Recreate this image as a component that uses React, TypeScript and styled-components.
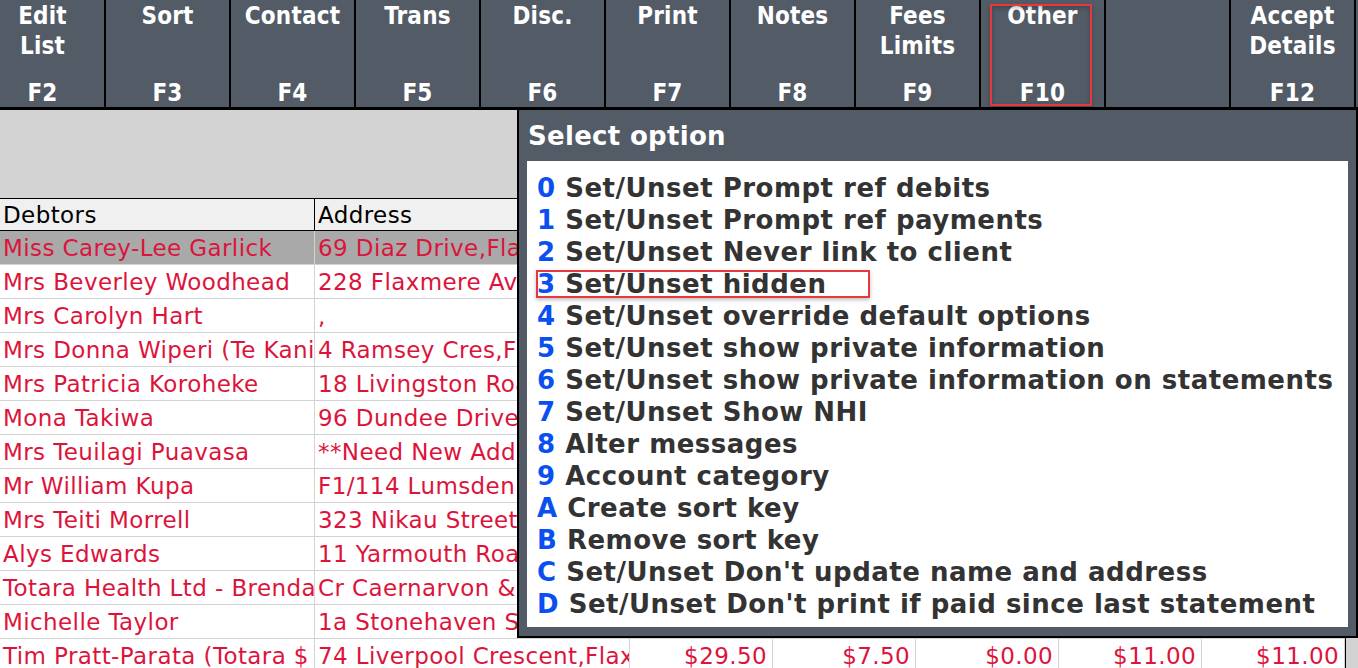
import React from 'react'
import styled, { createGlobalStyle } from 'styled-components'

const GlobalStyle = createGlobalStyle`
    html, body {
        margin: 0;
        padding: 0;
        background: #ffffff;
        overflow: hidden;
    }
    #root {
        width: 1358px;
        height: 668px;
    }
`

const SLATE = '#525b66'
const CRIMSON = '#dc143c'

type FKey = { label: string[]; key: string; highlight?: boolean }

const fkeys: FKey[] = [
    { label: ['Edit', 'List'], key: 'F2' },
    { label: ['Sort'], key: 'F3' },
    { label: ['Contact'], key: 'F4' },
    { label: ['Trans'], key: 'F5' },
    { label: ['Disc.'], key: 'F6' },
    { label: ['Print'], key: 'F7' },
    { label: ['Notes'], key: 'F8' },
    { label: ['Fees', 'Limits'], key: 'F9' },
    { label: ['Other'], key: 'F10', highlight: true },
    { label: [], key: '' },
    { label: ['Accept', 'Details'], key: 'F12' },
]

type Debtor = { name: string; address: string; amounts?: string[] }

const debtors: Debtor[] = [
    { name: 'Miss Carey-Lee Garlick', address: '69 Diaz Drive,Flaxmere' },
    { name: 'Mrs Beverley Woodhead', address: '228 Flaxmere Avenue,Flaxmere' },
    { name: 'Mrs Carolyn Hart', address: ',' },
    { name: 'Mrs Donna Wiperi (Te Kani)', address: '4 Ramsey Cres,Flaxmere' },
    { name: 'Mrs Patricia Koroheke', address: '18 Livingston Road,Flaxmere' },
    { name: 'Mona Takiwa', address: '96 Dundee Drive,Flaxmere' },
    { name: 'Mrs Teuilagi Puavasa', address: '**Need New Address**' },
    { name: 'Mr William Kupa', address: 'F1/114 Lumsden Road,Akina' },
    { name: 'Mrs Teiti Morrell', address: '323 Nikau Street,Hastings' },
    { name: 'Alys Edwards', address: '11 Yarmouth Road,Flaxmere' },
    { name: 'Totara Health Ltd - Brenda', address: 'Cr Caernarvon & Swansea Rd' },
    { name: 'Michelle Taylor', address: '1a Stonehaven Street,Flaxmere' },
    {
        name: 'Tim Pratt-Parata (Totara $ Health)',
        address: '74 Liverpool Crescent,Flaxmere',
        amounts: ['$29.50', '$7.50', '$0.00', '$11.00', '$11.00'],
    },
]

const numericColumns = 5

const options: { key: string; text: string; boxed?: boolean }[] = [
    { key: '0', text: 'Set/Unset Prompt ref debits' },
    { key: '1', text: 'Set/Unset Prompt ref payments' },
    { key: '2', text: 'Set/Unset Never link to client' },
    { key: '3', text: 'Set/Unset hidden', boxed: true },
    { key: '4', text: 'Set/Unset override default options' },
    { key: '5', text: 'Set/Unset show private information' },
    { key: '6', text: 'Set/Unset show private information on statements' },
    { key: '7', text: 'Set/Unset Show NHI' },
    { key: '8', text: 'Alter messages' },
    { key: '9', text: 'Account category' },
    { key: 'A', text: 'Create sort key' },
    { key: 'B', text: 'Remove sort key' },
    { key: 'C', text: "Set/Unset Don't update name and address" },
    { key: 'D', text: "Set/Unset Don't print if paid since last statement" },
]

const Screen = styled.div`
    position: relative;
    width: 1358px;
    height: 668px;
    overflow: hidden;
    font-family: 'DejaVu Sans', Verdana, sans-serif;
`

const Toolbar = styled.div`
    display: flex;
    height: 107px;
    margin-left: -19px;
    background: ${SLATE};
    border-bottom: 3px solid #000;
`

const FKeyButton = styled.div<{ $highlight?: boolean }>`
    position: relative;
    flex: 0 0 123px;
    display: flex;
    flex-direction: column;
    align-items: center;
    padding-top: 1px;
    border-right: 2px solid #000;
    color: #ffffff;
    font-family: 'DejaVu Sans Condensed', 'DejaVu Sans', Tahoma, sans-serif;
    font-weight: bold;
    font-size: 24px;
    letter-spacing: 0.2px;
    line-height: 30px;

    ${({ $highlight }) => $highlight && `
        &::after {
            content: '';
            position: absolute;
            left: 9px;
            right: 12px;
            top: 4px;
            bottom: 1px;
            border: 2px solid #e8383d;
            box-shadow: inset 0 2px 4px rgba(0, 0, 0, 0.25), 0 2px 4px rgba(0, 0, 0, 0.25);
        }
    `}
`

const FKeyLabel = styled.div`
    flex: 1;
    text-align: center;
`

const FKeyCode = styled.div`
    height: 29px;
    text-align: center;
`

const GreyBand = styled.div`
    height: 88px;
    background: #d3d3d3;
    border-bottom: 1px solid #000;
`

const Grid = styled.div`
    display: grid;
    grid-template-columns: 315px 315px repeat(${numericColumns}, 143px) 1fr;
`

const HeaderCell = styled.div`
    height: 31px;
    line-height: 32px;
    padding-left: 3px;
    background: #f0f0f0;
    color: #000;
    font-size: 23px;
    letter-spacing: 0.4px;
    border-bottom: 1px solid #000;
    border-right: 1px solid #000;
    white-space: nowrap;
    overflow: hidden;
`

const Cell = styled.div<{ $selected?: boolean; $numeric?: boolean }>`
    height: 33px;
    line-height: 34px;
    padding: ${({ $numeric }) => ($numeric ? '0 5px 0 0' : '0 0 0 3px')};
    text-align: ${({ $numeric }) => ($numeric ? 'right' : 'left')};
    background: ${({ $selected }) => ($selected ? '#a9a9a9' : '#ffffff')};
    color: ${CRIMSON};
    font-size: 23px;
    letter-spacing: 0.4px;
    border-bottom: 1px solid #d3d3d3;
    border-right: 1px solid #d3d3d3;
    white-space: nowrap;
    overflow: hidden;
`

const ScrollTrack = styled.div`
    background: #d3d3d3;
    border-left: 1px solid #000;
`

const Dialog = styled.div`
    position: absolute;
    left: 517px;
    top: 110px;
    width: 837px;
    height: 526px;
    display: flex;
    flex-direction: column;
    background: ${SLATE};
    border-left: 2px solid #000;
    border-right: 2px solid #000;
    border-bottom: 2px solid #000;
`

const DialogTitle = styled.div`
    height: 51px;
    line-height: 53px;
    padding-left: 9px;
    color: #ffffff;
    font-weight: bold;
    font-size: 26px;
    letter-spacing: 0.3px;
`

const DialogBody = styled.div`
    margin: 0 8px 9px 8px;
    flex: 1;
    background: #ffffff;
    padding: 11px 0 0 10px;
    display: flex;
    flex-direction: column;
`

const OptionRow = styled.div<{ $boxed?: boolean }>`
    position: relative;
    height: 32px;
    line-height: 33px;
    color: #333333;
    font-weight: bold;
    font-size: 26px;
    letter-spacing: 0.5px;
    white-space: nowrap;

    ${({ $boxed }) => $boxed && `
        &::after {
            content: '';
            position: absolute;
            left: -1px;
            top: 2px;
            width: 330px;
            height: 24px;
            border: 2px solid #e8383d;
            box-shadow: 0 2px 4px rgba(0, 0, 0, 0.25);
        }
    `}
`

const OptionKey = styled.span`
    color: #0a50f0;
`

const App = () => {
    const blanks = Array.from({ length: numericColumns }, () => '')

    return (
        <Screen>
            <GlobalStyle />
            <Toolbar>
                {fkeys.map((fk, i) => (
                    <FKeyButton key={i} $highlight={fk.highlight}>
                        <FKeyLabel>
                            {fk.label.map(line => <div key={line}>{line}</div>)}
                        </FKeyLabel>
                        <FKeyCode>{fk.key}</FKeyCode>
                    </FKeyButton>
                ))}
            </Toolbar>
            <GreyBand />
            <Grid>
                <HeaderCell>Debtors</HeaderCell>
                <HeaderCell>Address</HeaderCell>
                {blanks.map((_, j) => <HeaderCell key={j} />)}
                <ScrollTrack />
                {debtors.map((d, i) => (
                    <React.Fragment key={d.name}>
                        <Cell $selected={i === 0}>{d.name}</Cell>
                        <Cell $selected={i === 0}>{d.address}</Cell>
                        {(d.amounts ?? blanks).map((a, j) => (
                            <Cell key={j} $numeric $selected={i === 0}>{a}</Cell>
                        ))}
                        <ScrollTrack />
                    </React.Fragment>
                ))}
            </Grid>
            <Dialog>
                <DialogTitle>Select option</DialogTitle>
                <DialogBody>
                    {options.map(o => (
                        <OptionRow key={o.key} $boxed={o.boxed}>
                            <OptionKey>{o.key}</OptionKey> {o.text}
                        </OptionRow>
                    ))}
                </DialogBody>
            </Dialog>
        </Screen>
    )
}

export default App
